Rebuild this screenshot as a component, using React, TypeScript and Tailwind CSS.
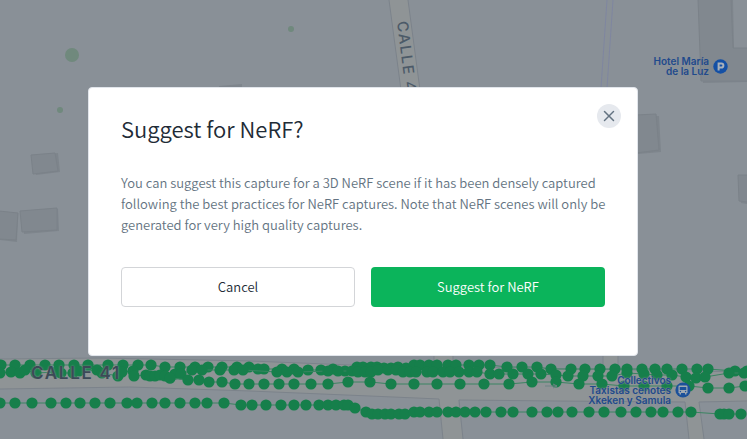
import { useState } from 'react'
import { X } from 'lucide-react'

// capture points along the street, one [x, y] per photo
const captureTracks: number[][][] = [
  [
    [1, 365], [15, 365], [30, 365], [45, 365], [59, 365], [74, 365], [88, 365], [108, 365], [123, 365], [138, 365], [151, 365],
    [165, 367], [180, 367], [195, 367], [208, 367], [222, 367], [237, 367], [249, 367], [258, 369], [264, 369], [282, 369],
    [294, 369], [308, 370], [321, 370], [333, 369], [345, 371], [357, 367], [363, 367], [371, 367], [377, 367], [384, 368],
    [391, 368], [398, 367], [406, 368], [414, 365], [420, 365], [429, 365], [437, 365], [448, 365], [456, 365], [469, 365],
    [479, 365], [490, 365], [507, 367], [522, 367], [537, 367], [551, 369], [571, 369], [585, 369], [600, 369], [615, 369],
    [627, 369], [642, 369], [655, 369], [667, 369], [682, 369], [697, 369], [708, 369], [735, 371], [747, 371],
  ],
  [
    [0, 373], [11, 372], [20, 373], [25, 370], [36, 373], [56, 372], [61, 373], [73, 373], [79, 371], [97, 370], [102, 373],
    [118, 376], [122, 372], [133, 371], [134, 376], [146, 375], [150, 376], [155, 376], [160, 375], [165, 376], [170, 378],
    [175, 374], [181, 374], [192, 370], [202, 370], [220, 370], [234, 370], [243, 370], [277, 372], [287, 372], [298, 372],
    [328, 371], [338, 371], [352, 371], [358, 372], [365, 372], [371, 372], [378, 370], [388, 370], [396, 370], [403, 372],
    [410, 372], [416, 372], [427, 372], [433, 372], [443, 372], [450, 372], [459, 372], [469, 372], [477, 372], [490, 374],
    [499, 374], [513, 374], [528, 374], [541, 374], [556, 375], [568, 376], [583, 376], [598, 376], [612, 376], [627, 373],
    [644, 374], [657, 375], [672, 375], [686, 377], [696, 378], [705, 377], [729, 373], [744, 373],
  ],
  [
    [170, 378], [188, 380], [199, 380], [209, 382], [222, 382], [235, 384], [249, 384], [264, 384], [279, 384], [294, 384],
    [311, 384], [328, 384], [348, 382], [370, 382], [391, 384], [414, 384], [437, 384], [460, 384], [484, 384], [509, 384],
    [532, 382], [556, 382], [579, 384], [602, 384], [624, 386], [644, 386], [667, 386], [689, 386], [708, 388], [729, 388], [745, 386],
  ],
  [
    [0, 403], [15, 403], [32, 403], [51, 403], [66, 403], [80, 403], [95, 403], [110, 403], [127, 403], [137, 403], [152, 403],
    [165, 403], [180, 403], [195, 403], [207, 403], [224, 403], [241, 405], [252, 405], [266, 405], [281, 405], [294, 405],
    [306, 405], [319, 405], [328, 405], [336, 405], [344, 405], [348, 405], [355, 408], [366, 412], [372, 414], [378, 414],
    [385, 414], [391, 414], [399, 414], [405, 414], [414, 412], [420, 412], [429, 412], [437, 412], [448, 412], [456, 412],
    [465, 412], [475, 412], [486, 412], [501, 412], [513, 412], [532, 412], [547, 412], [558, 412], [572, 412], [589, 412],
    [604, 412], [621, 412], [636, 412], [651, 412], [663, 412], [678, 412], [691, 412], [720, 414], [724, 414], [729, 414],
    [741, 414],
  ],
]

function MapCanvas() {
  return (
    <svg
      className="absolute inset-0 w-full h-full"
      viewBox="0 0 747 439"
      preserveAspectRatio="xMidYMid slice"
      aria-hidden="true"
    >
      {/* Roads */}
      <g fill="#8f9496">
        <path d="M389 0H408L420 90H401Z" />
        <path d="M434 340H453V370H434Z" />
        <path d="M603 340H618V374H603Z" />
        <path d="M0 359L100 358L250 361L350 365L747 372V402L557 401L439 400L370 396L250 391L130 387L0 389Z" />
        <path d="M439 399H458L463 439H443Z" />
        <path d="M685 401H699L704 439H689Z" />
      </g>
      <g fill="none" stroke="#7c838b" strokeWidth="1">
        <path d="M389 0L401 90M408 0L420 90" />
        <path d="M434 340V367M453 340V367M603 340V370M618 340V370" />
        <path d="M0 359L100 358L250 361L350 365L747 372" />
        <path d="M0 389L130 387L250 391L370 396L439 399L443 439" />
        <path d="M463 439L459 400L557 401L685 402L689 439" />
        <path d="M704 439L699 402L747 401" />
      </g>
      <path d="M607 0L601 88M613 0L607 88" fill="none" stroke="#7f86a0" strokeWidth="1" />

      {/* Buildings */}
      <g fill="#7e858c">
        <path d="M33 156L58 153L60 172L36 175Z" />
        <path d="M22 212L58 209L59 231L24 234Z" />
        <path d="M0 213L18 214L17 242L0 240Z" />
        <path d="M638 116L659 116L661 152L638 154Z" />
        <path d="M700 0H733L734 48H747V82L703 83Z" />
        <path d="M740 177H747V204L741 203Z" />
        <path d="M219 86L242 84V90H219Z" />
      </g>
      <g fill="#81888f" stroke="#7b8289" strokeWidth="1">
        <path d="M31 155L55 153L58 171L33 174Z" />
        <path d="M20 211L57 208V230L22 232Z" />
        <path d="M-1 211L18 213L16 240L-1 239Z" />
        <path d="M636 115L656 114L659 150L636 153Z" />
        <path d="M698 -1H731L733 48H748V81H701Z" />
        <path d="M738 175H748V202L739 201Z" />
      </g>

      {/* Trees */}
      <g fill="#70897d">
        <circle cx="72" cy="55" r="7" />
        <circle cx="60" cy="110" r="3" />
        <circle cx="291" cy="29" r="3" />
      </g>

      {/* Captures */}
      {captureTracks.map((track, i) => (
        <g key={i} fill="#167f4b">
          <polyline points={track.join(' ')} fill="none" stroke="#3b8462" strokeWidth="1" />
          {track.map(([x, y], j) => (
            <circle key={j} cx={x} cy={y} r="5.6" />
          ))}
        </g>
      ))}
      <path d="M545 386H557M553 384L557 386L553 388" fill="none" stroke="#6d8384" strokeWidth="1" />
    </svg>
  )
}

function MapLabels() {
  return (
    <div className="absolute inset-0 font-[Inter,sans-serif]">
      <span className="absolute left-[31px] top-[363px] text-[17px] leading-5 font-semibold tracking-widest text-[#3c4a57] [text-shadow:0_0_2px_#8f9496]">
        CALLE 41
      </span>
      <span className="absolute left-[412px] top-[20px] origin-top-left rotate-[83deg] text-[15px] leading-5 font-medium tracking-widest whitespace-nowrap text-[#4c5a68]">
        CALLE 44
      </span>

      <div className="absolute right-[19px] top-[56px] flex items-center gap-1">
        <span className="text-right text-[10px] leading-[10px] font-semibold text-[#1f4a8c]">
          Hotel María<br />de la Luz
        </span>
        <svg width="15" height="15" viewBox="0 0 15 15" aria-hidden="true">
          <circle cx="7.5" cy="7.5" r="7.2" fill="#1450a5" />
          <path d="M5.6 11.5V4.4H8.3A2 2 0 0 1 8.3 8.6H5.6" fill="none" stroke="#a9b1ba" strokeWidth="2" />
        </svg>
      </div>

      <div className="absolute right-[56px] top-[375px] flex items-center gap-1">
        <span className="text-right text-[10px] leading-[10px] font-semibold text-[#1f4a8c] [text-shadow:0_0_1px_#8f9496,0_0_2px_#8f9496]">
          Collectivos<br />Taxistas cenotes<br />Xkeken y Samula
        </span>
        <svg width="16" height="16" viewBox="0 0 16 16" aria-hidden="true">
          <circle cx="8" cy="8" r="7.6" fill="#1c519a" />
          <path d="M4.5 3.5H11.5Q12.5 3.5 12.5 4.5V11H11.5V12.5H10V11H6V12.5H4.5V11H3.5V4.5Q3.5 3.5 4.5 3.5Z" fill="#a0a9b2" />
          <path d="M4.7 5H11.3V8H4.7Z" fill="#1c519a" />
          <circle cx="5.4" cy="9.5" r=".7" fill="#1c519a" />
          <circle cx="10.6" cy="9.5" r=".7" fill="#1c519a" />
        </svg>
      </div>
    </div>
  )
}

export default function App() {
  const [open, setOpen] = useState(true)

  return (
    <div className="relative min-h-screen overflow-hidden bg-[#899097]">
      <MapCanvas />
      <MapLabels />

      {open && (
        <div className="relative flex min-h-screen items-center justify-center pt-1 pr-[21px] font-['Noto_Sans_CJK_SC',sans-serif] font-[350]">
          <div
            role="dialog"
            aria-modal="true"
            aria-labelledby="nerf-title"
            className="relative w-full max-w-[550px] rounded border border-[#e1e5eb] bg-white px-8 pt-6 pb-12"
          >
            <button
              aria-label="Close"
              className="absolute top-4 right-4 flex h-6 w-6 items-center justify-center rounded-full bg-[#e6e9ee] text-[#637381]"
              onClick={() => setOpen(false)}
            >
              <X size={18} strokeWidth={2} />
            </button>

            <h2 id="nerf-title" className="mb-7 text-[22px] leading-8 font-[350] text-[#212b36]">
              Suggest for NeRF?
            </h2>
            <p className="-mr-3 mb-8 text-[13px] leading-[21px] text-[#637381]">
              You can suggest this capture for a 3D NeRF scene if it has been densely captured following the best
              practices for NeRF captures. Note that NeRF scenes will only be generated for very high quality captures.
            </p>

            {/* Actions */}
            <div className="grid grid-cols-2 gap-4 text-[13px]">
              <button className="h-10 rounded border border-[#d3d5d8] bg-white text-[#212b36]" onClick={() => setOpen(false)}>
                Cancel
              </button>
              <button className="h-10 rounded bg-[#0bb45b] text-white" onClick={() => setOpen(false)}>
                Suggest for NeRF
              </button>
            </div>
          </div>
        </div>
      )}
    </div>
  )
}
